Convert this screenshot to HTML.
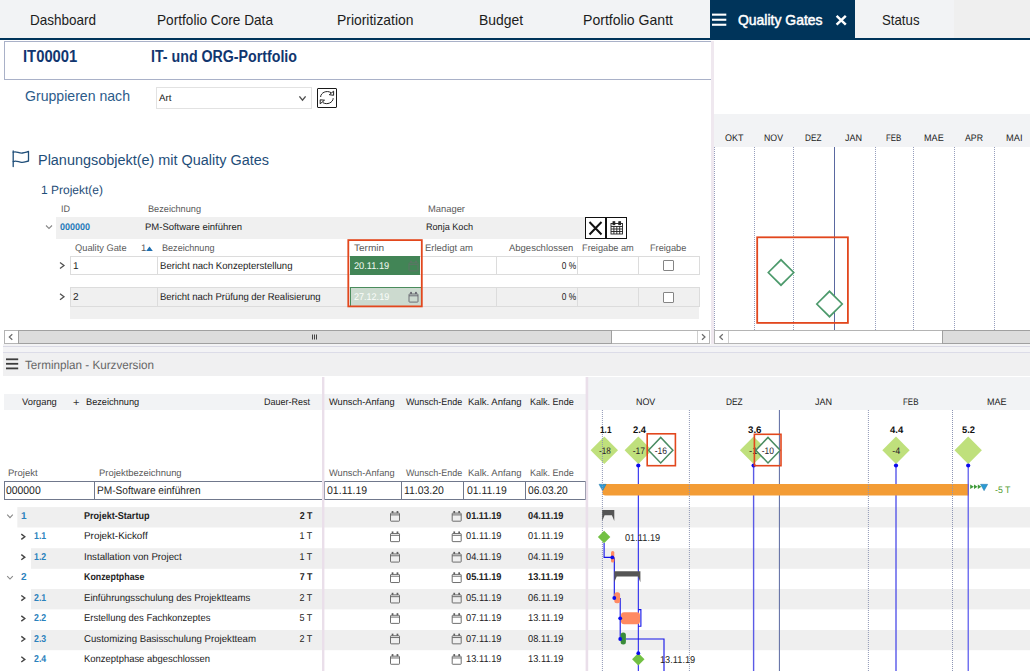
<!DOCTYPE html>
<html><head><meta charset="utf-8"><title>Quality Gates</title>
<style>
html,body{margin:0;padding:0;background:#fff;}
body{width:1030px;height:671px;position:relative;overflow:hidden;font-family:"Liberation Sans",sans-serif;}
.a{position:absolute;box-sizing:border-box;}
.t{position:absolute;white-space:pre;line-height:1;transform-origin:0 0;font-family:"Liberation Sans",sans-serif;}
svg{position:absolute;left:0;top:0;overflow:visible;}
</style></head><body>
<div class="a" style="left:0px;top:0px;width:1030px;height:38px;background:#f2f3f5;"></div>
<div class="a" style="left:954px;top:0px;width:76px;height:38px;background:#efefef;"></div>
<div class="a" style="left:0px;top:38px;width:1030px;height:2px;background:#00345a;"></div>
<div class="a" style="left:710px;top:0px;width:145px;height:40px;background:#00345a;"></div>
<span class="t" style="left:29.50px;top:12.73px;font-size:14.5px;color:#1c1c1c;transform:scaleX(0.9304);">Dashboard</span>
<span class="t" style="left:156.50px;top:12.73px;font-size:14.5px;color:#1c1c1c;transform:scaleX(0.9407);">Portfolio Core Data</span>
<span class="t" style="left:337.00px;top:12.73px;font-size:14.5px;color:#1c1c1c;transform:scaleX(0.9589);">Prioritization</span>
<span class="t" style="left:479.00px;top:12.73px;font-size:14.5px;color:#1c1c1c;transform:scaleX(0.9572);">Budget</span>
<span class="t" style="left:583.00px;top:12.73px;font-size:14.5px;color:#1c1c1c;transform:scaleX(0.9710);">Portfolio Gantt</span>
<span class="t" style="left:737.50px;top:12.73px;font-size:14.5px;color:#fff;transform:scaleX(0.9619);-webkit-text-stroke:0.5px #fff;">Quality Gates</span>
<span class="t" style="left:882.40px;top:12.73px;font-size:14.5px;color:#1c1c1c;transform:scaleX(0.9122);">Status</span>
<svg width="1030" height="671" viewBox="0 0 1030 671"><rect x="712" y="13.6" width="14.3" height="2.1" fill="#fff"/><rect x="712" y="18.7" width="14.3" height="2.1" fill="#fff"/><rect x="712" y="23.7" width="14.3" height="2.1" fill="#fff"/><path d="M836.6 15.9 L845.8 24.6 M845.8 15.9 L836.6 24.6" stroke="#fff" stroke-width="2.5" fill="none"/></svg>
<div class="a" style="left:4px;top:41px;width:708px;height:39px;background:#fff;border:1px solid #a9b1c8;"></div>
<span class="t" style="left:22.70px;top:49.26px;font-size:16px;color:#11366f;font-weight:700;transform:scaleX(0.9247);">IT00001</span>
<span class="t" style="left:151.00px;top:49.26px;font-size:16px;color:#11366f;font-weight:700;transform:scaleX(0.8880);">IT- und ORG-Portfolio</span>
<div class="a" style="left:711px;top:41px;width:3px;height:303px;background:#efe8ef;"></div>
<span class="t" style="left:25.00px;top:88.93px;font-size:14.5px;color:#2c5b8a;transform:scaleX(0.9721);">Gruppieren nach</span>
<div class="a" style="left:156px;top:87px;width:156px;height:22px;background:#fff;border:1px solid #e2e2e2;"></div>
<span class="t" style="left:159.00px;top:93.16px;font-size:9.5px;color:#222;transform:scaleX(1.0296) rotate(0.03deg);">Art</span>
<div class="a" style="left:316.5px;top:88px;width:20.5px;height:20px;background:#fff;border:1px solid #1a1a1a;border-radius:1px;"></div>
<svg width="1030" height="671" viewBox="0 0 1030 671"><path d="M299.4 96.4 L302.5 100.2 L305.6 96.4" stroke="#505050" stroke-width="1.4" fill="none"/><g stroke="#222" stroke-width="1" fill="none" stroke-linejoin="round"><path d="M320.6 97 C320.8 92.6 326.5 90 331 92.6"/><path d="M333.2 98.2 C333 102.6 327.3 105.2 322.8 102.6"/><path d="M329.3 94.7 L333.6 91.2 L333.6 95.3 Z"/><path d="M324.5 100.2 L320.2 99.8 L320.2 103.8 Z"/></g><g stroke="#1f4e79" stroke-width="1.3" fill="none" stroke-linecap="round" stroke-linejoin="round"><path d="M13.2 151 L13.2 166.5"/><path d="M13.2 152.3 C16 150.8 19 153.6 22.5 153 C25 152.6 27 151.8 28.5 151.5 L28.5 161 C26 161.5 24 162.6 21.5 162.3 C18.5 162 16 160.3 13.2 161.6"/></g></svg>
<span class="t" style="left:38.00px;top:152.48px;font-size:15.5px;color:#1f4e79;transform:scaleX(0.9310);">Planungsobjekt(e) mit Quality Gates</span>
<span class="t" style="left:41.00px;top:183.84px;font-size:12px;color:#1f4e79;transform:scaleX(0.9995) rotate(0.03deg);">1 Projekt(e)</span>
<span class="t" style="left:61.00px;top:203.96px;font-size:9.5px;color:#5a5a5a;transform:scaleX(0.9474) rotate(0.03deg);">ID</span>
<span class="t" style="left:147.70px;top:203.96px;font-size:9.5px;color:#5a5a5a;transform:scaleX(0.9647) rotate(0.03deg);">Bezeichnung</span>
<span class="t" style="left:428.20px;top:203.96px;font-size:9.5px;color:#5a5a5a;transform:scaleX(0.9867) rotate(0.03deg);">Manager</span>
<div class="a" style="left:56px;top:217px;width:530px;height:22px;background:#f0f0f0;"></div>
<svg width="1030" height="671" viewBox="0 0 1030 671"><path d="M46 225.5 L49 228.5 L52 225.5" stroke="#888" stroke-width="1.1" fill="none"/></svg>
<span class="t" style="left:59.60px;top:222.36px;font-size:9.5px;color:#1f7ab8;font-weight:700;transform:scaleX(0.9463) rotate(0.03deg);">000000</span>
<span class="t" style="left:145.20px;top:222.36px;font-size:9.5px;color:#222;transform:scaleX(0.9982) rotate(0.03deg);">PM-Software einführen</span>
<span class="t" style="left:425.80px;top:222.36px;font-size:9.5px;color:#222;transform:scaleX(0.9567) rotate(0.03deg);">Ronja Koch</span>
<div class="a" style="left:585px;top:217px;width:21px;height:22px;background:#fff;border:1px solid #111;"></div>
<div class="a" style="left:606px;top:217px;width:21px;height:22px;background:#fff;border:1px solid #111;"></div>
<svg width="1030" height="671" viewBox="0 0 1030 671"><path d="M589.5 222 L601.5 234.5 M601.5 222 L589.5 234.5" stroke="#111" stroke-width="2" fill="none"/><g stroke="#222" stroke-width="0.9" fill="none"><rect x="611" y="223.5" width="11.5" height="10.5"/><path d="M611 226.5 H622.5 M611 229 H622.5 M611 231.5 H622.5 M613.9 226.5 V234 M616.8 226.5 V234 M619.7 226.5 V234"/><rect x="613" y="221.7" width="1.8" height="3" fill="#222"/><rect x="618.8" y="221.7" width="1.8" height="3" fill="#222"/></g></svg>
<span class="t" style="left:74.70px;top:242.66px;font-size:9.5px;color:#5a5a5a;transform:scaleX(0.9770) rotate(0.03deg);">Quality Gate</span>
<span class="t" style="left:140.60px;top:242.66px;font-size:9.5px;color:#5a5a5a;transform:scaleX(1.0000) rotate(0.03deg);">1</span>
<svg width="1030" height="671" viewBox="0 0 1030 671"><path d="M146.2 251 L149.5 246.5 L152.8 251 Z" fill="#1f6fb0"/></svg>
<span class="t" style="left:161.60px;top:242.66px;font-size:9.5px;color:#5a5a5a;transform:scaleX(0.9556) rotate(0.03deg);">Bezeichnung</span>
<span class="t" style="left:354.40px;top:242.66px;font-size:9.5px;color:#5a5a5a;transform:scaleX(1.0591) rotate(0.03deg);">Termin</span>
<span class="t" style="left:424.50px;top:242.66px;font-size:9.5px;color:#5a5a5a;transform:scaleX(0.9987) rotate(0.03deg);">Erledigt am</span>
<span class="t" style="left:508.70px;top:242.66px;font-size:9.5px;color:#5a5a5a;transform:scaleX(0.9979) rotate(0.03deg);">Abgeschlossen</span>
<span class="t" style="left:582.00px;top:242.66px;font-size:9.5px;color:#5a5a5a;transform:scaleX(0.9711) rotate(0.03deg);">Freigabe am</span>
<span class="t" style="left:650.00px;top:242.66px;font-size:9.5px;color:#5a5a5a;transform:scaleX(0.9680) rotate(0.03deg);">Freigabe</span>
<div class="a" style="left:70px;top:256px;width:630px;height:19px;background:#fff;border:1px solid #dcdcdc;"></div>
<div class="a" style="left:157px;top:256px;width:1px;height:19px;background:#dcdcdc;"></div>
<div class="a" style="left:496px;top:256px;width:1px;height:19px;background:#dcdcdc;"></div>
<div class="a" style="left:577px;top:256px;width:1px;height:19px;background:#dcdcdc;"></div>
<div class="a" style="left:638px;top:256px;width:1px;height:19px;background:#dcdcdc;"></div>
<div class="a" style="left:70px;top:287px;width:630px;height:20px;background:#f0f0f0;border:1px solid #dcdcdc;"></div>
<div class="a" style="left:157px;top:287px;width:1px;height:20px;background:#dcdcdc;"></div>
<div class="a" style="left:496px;top:287px;width:1px;height:20px;background:#dcdcdc;"></div>
<div class="a" style="left:577px;top:287px;width:1px;height:20px;background:#dcdcdc;"></div>
<div class="a" style="left:638px;top:287px;width:1px;height:20px;background:#dcdcdc;"></div>
<div class="a" style="left:70px;top:307px;width:629px;height:11.5px;background:#f0f0f0;"></div>
<svg width="1030" height="671" viewBox="0 0 1030 671"><path d="M60 262.5 L64 265.5 L60 268.5" stroke="#505050" stroke-width="1.25" fill="none"/><path d="M60 293.7 L64 296.7 L60 299.7" stroke="#505050" stroke-width="1.25" fill="none"/></svg>
<span class="t" style="left:73.20px;top:260.74px;font-size:10px;color:#222;transform:scaleX(1.0000) rotate(0.03deg);">1</span>
<span class="t" style="left:73.20px;top:291.74px;font-size:10px;color:#222;transform:scaleX(1.0000) rotate(0.03deg);">2</span>
<span class="t" style="left:159.50px;top:260.74px;font-size:10px;color:#222;transform:scaleX(0.9572) rotate(0.03deg);">Bericht nach Konzepterstellung</span>
<span class="t" style="left:159.50px;top:291.74px;font-size:10px;color:#222;transform:scaleX(0.9498) rotate(0.03deg);">Bericht nach Prüfung der Realisierung</span>
<span class="t" style="left:558.77px;top:260.74px;font-size:10px;color:#222;transform:scaleX(0.8355) rotate(0.03deg);transform-origin:100% 0;">0 %</span>
<span class="t" style="left:558.77px;top:291.74px;font-size:10px;color:#222;transform:scaleX(0.8355) rotate(0.03deg);transform-origin:100% 0;">0 %</span>
<div class="a" style="left:350px;top:256px;width:70px;height:19px;background:#428556;"></div>
<div class="a" style="left:350px;top:287px;width:71px;height:19.5px;background:#ccdacf;border:1px solid #4a8c5c;border-right:none;border-bottom:none;"></div>
<span class="t" style="left:353.60px;top:260.60px;font-size:9.8px;color:#f4fbf4;transform:scaleX(0.9406) rotate(0.03deg);">20.11.19</span>
<span class="t" style="left:353.60px;top:291.60px;font-size:9.8px;color:#fafdfa;transform:scaleX(0.9229) rotate(0.03deg);">27.12.19</span>
<svg width="1030" height="671" viewBox="0 0 1030 671"><g stroke="#5c7565" stroke-width="1.0" fill="none"><rect x="409.0" y="262.8" width="9" height="8.1" rx="0.6"/><path d="M409.0 264.6 H418.0" /><rect x="410.2" y="260.7" width="1.7" height="2.1" fill="#5c7565" stroke="none"/><rect x="415.1" y="260.7" width="1.7" height="2.1" fill="#5c7565" stroke="none"/></g><g stroke="#62626c" stroke-width="0.9" fill="#ccdacf"><rect x="409.0" y="294.0" width="9" height="8.1" rx="0.6"/><path d="M409.0 295.8 H418.0" /><rect x="410.2" y="291.9" width="1.7" height="2.1" fill="#62626c" stroke="none"/><rect x="415.1" y="291.9" width="1.7" height="2.1" fill="#62626c" stroke="none"/></g></svg>
<div class="a" style="left:662.5px;top:260px;width:11.5px;height:11px;background:#fff;border:1px solid #858585;border-radius:1px;"></div>
<div class="a" style="left:662.5px;top:291.5px;width:11.5px;height:11px;background:#fff;border:1px solid #858585;border-radius:1px;"></div>
<svg width="1030" height="671" viewBox="0 0 1030 671"><rect x="348.29999999999995" y="240.1" width="73.50000000000001" height="66.30000000000003" fill="none" stroke="#e2471d" stroke-width="1.8"/></svg>
<div class="a" style="left:714px;top:114px;width:316px;height:33px;background:#f2f3f5;"></div>
<span class="t" style="left:724.50px;top:132.96px;font-size:9.5px;color:#1c1c1c;transform:scaleX(0.9472) rotate(0.03deg);">OKT</span>
<span class="t" style="left:763.50px;top:132.96px;font-size:9.5px;color:#1c1c1c;transform:scaleX(0.9226) rotate(0.03deg);">NOV</span>
<span class="t" style="left:805.40px;top:132.96px;font-size:9.5px;color:#1c1c1c;transform:scaleX(0.8632) rotate(0.03deg);">DEZ</span>
<span class="t" style="left:845.30px;top:132.96px;font-size:9.5px;color:#1c1c1c;transform:scaleX(0.9525) rotate(0.03deg);">JAN</span>
<span class="t" style="left:886.20px;top:132.96px;font-size:9.5px;color:#1c1c1c;transform:scaleX(0.8331) rotate(0.03deg);">FEB</span>
<span class="t" style="left:923.50px;top:132.96px;font-size:9.5px;color:#1c1c1c;transform:scaleX(0.9566) rotate(0.03deg);">MAE</span>
<span class="t" style="left:965.00px;top:132.96px;font-size:9.5px;color:#1c1c1c;transform:scaleX(0.9209) rotate(0.03deg);">APR</span>
<span class="t" style="left:1006.00px;top:132.96px;font-size:9.5px;color:#1c1c1c;transform:scaleX(0.9769) rotate(0.03deg);">MAI</span>
<svg width="1030" height="671" viewBox="0 0 1030 671"><path d="M714.5 147 V330" stroke="#969ebc" stroke-width="1" stroke-dasharray="1 1"/><path d="M754.5 147 V330" stroke="#969ebc" stroke-width="1" stroke-dasharray="1 1"/><path d="M793.5 147 V330" stroke="#969ebc" stroke-width="1" stroke-dasharray="1 1"/><path d="M875.5 147 V330" stroke="#969ebc" stroke-width="1" stroke-dasharray="1 1"/><path d="M913.5 147 V330" stroke="#969ebc" stroke-width="1" stroke-dasharray="1 1"/><path d="M954.5 147 V330" stroke="#969ebc" stroke-width="1" stroke-dasharray="1 1"/><path d="M994.5 147 V330" stroke="#969ebc" stroke-width="1" stroke-dasharray="1 1"/><path d="M834.5 147 V330" stroke="#5a68a0" stroke-width="1"/><polygon points="768.3,272.5 781,259.8 793.7,272.5 781,285.2" fill="#fff" stroke="#4d9a6c" stroke-width="1.7"/><polygon points="816.8,304 829.5,291.3 842.2,304 829.5,316.7" fill="#fff" stroke="#4d9a6c" stroke-width="1.7"/><rect x="757.1999999999999" y="237.3" width="90.7" height="85.60000000000001" fill="none" stroke="#e2471d" stroke-width="1.8"/></svg>
<div class="a" style="left:4px;top:330px;width:706px;height:14px;background:#fff;border:1px solid #b4b4b4;"></div>
<div class="a" style="left:18px;top:330px;width:594px;height:14px;background:#dcdcdc;border:1px solid #a0a0a0;"></div>
<div class="a" style="left:697px;top:331px;width:1px;height:12px;background:#cfcfcf;"></div>
<div class="a" style="left:714px;top:330px;width:316px;height:14px;background:#fff;border:1px solid #b4b4b4;"></div>
<div class="a" style="left:728px;top:331px;width:1px;height:12px;background:#cfcfcf;"></div>
<div class="a" style="left:942px;top:330px;width:90px;height:14px;background:#dcdcdc;border:1px solid #a0a0a0;"></div>
<svg width="1030" height="671" viewBox="0 0 1030 671"><path d="M12.3 334.2 L9.3 337 L12.3 339.8" stroke="#6a6a6a" stroke-width="1.2" fill="none"/><path d="M702 334.2 L705 337 L702 339.8" stroke="#6a6a6a" stroke-width="1.2" fill="none"/><path d="M722.8 334.2 L719.8 337 L722.8 339.8" stroke="#6a6a6a" stroke-width="1.2" fill="none"/><path d="M312.5 334.5 V339.5" stroke="#444" stroke-width="1"/><path d="M314.5 334.5 V339.5" stroke="#444" stroke-width="1"/><path d="M316.5 334.5 V339.5" stroke="#444" stroke-width="1"/></svg>
<div class="a" style="left:3px;top:344px;width:1027px;height:9px;background:#f3f3f5;"></div>
<div class="a" style="left:3px;top:346px;width:1027px;height:1px;background:#d9d9e4;"></div>
<div class="a" style="left:3px;top:352px;width:1027px;height:1px;background:#dcdce8;"></div>
<div class="a" style="left:3px;top:353px;width:1027px;height:23px;background:#f0f0f1;"></div>
<svg width="1030" height="671" viewBox="0 0 1030 671"><rect x="6" y="358.40000000000003" width="12.2" height="1.8" fill="#3c3c3c"/><rect x="6" y="362.90000000000003" width="12.2" height="1.8" fill="#3c3c3c"/><rect x="6" y="367.5" width="12.2" height="1.8" fill="#3c3c3c"/></svg>
<span class="t" style="left:24.60px;top:359.24px;font-size:12px;color:#666;transform:scaleX(0.9720) rotate(0.03deg);">Terminplan - Kurzversion</span>
<div class="a" style="left:4px;top:394px;width:582px;height:16px;background:#f2f3f5;"></div>
<div class="a" style="left:586px;top:377px;width:444px;height:33px;background:#f2f3f5;"></div>
<span class="t" style="left:21.50px;top:396.86px;font-size:9.5px;color:#222;transform:scaleX(0.9829) rotate(0.03deg);">Vorgang</span>
<span class="t" style="left:73.00px;top:396.79px;font-size:11px;color:#333;transform:scaleX(1.0000) rotate(0.03deg);">+</span>
<span class="t" style="left:86.40px;top:396.86px;font-size:9.5px;color:#222;transform:scaleX(0.9684) rotate(0.03deg);">Bezeichnung</span>
<span class="t" style="left:264.30px;top:396.86px;font-size:9.5px;color:#222;transform:scaleX(0.9469) rotate(0.03deg);">Dauer-Rest</span>
<span class="t" style="left:328.70px;top:396.86px;font-size:9.5px;color:#222;transform:scaleX(0.9730) rotate(0.03deg);">Wunsch-Anfang</span>
<span class="t" style="left:406.20px;top:396.86px;font-size:9.5px;color:#222;transform:scaleX(0.9462) rotate(0.03deg);">Wunsch-Ende</span>
<span class="t" style="left:468.30px;top:396.86px;font-size:9.5px;color:#222;transform:scaleX(1.0026) rotate(0.03deg);">Kalk. Anfang</span>
<span class="t" style="left:530.00px;top:396.86px;font-size:9.5px;color:#222;transform:scaleX(0.9510) rotate(0.03deg);">Kalk. Ende</span>
<span class="t" style="left:8.40px;top:467.96px;font-size:9.5px;color:#5a5a5a;transform:scaleX(1.0007) rotate(0.03deg);">Projekt</span>
<span class="t" style="left:98.60px;top:467.96px;font-size:9.5px;color:#5a5a5a;transform:scaleX(0.9898) rotate(0.03deg);">Projektbezeichnung</span>
<span class="t" style="left:328.70px;top:467.96px;font-size:9.5px;color:#5a5a5a;transform:scaleX(0.9730) rotate(0.03deg);">Wunsch-Anfang</span>
<span class="t" style="left:406.20px;top:467.96px;font-size:9.5px;color:#5a5a5a;transform:scaleX(0.9462) rotate(0.03deg);">Wunsch-Ende</span>
<span class="t" style="left:468.30px;top:467.96px;font-size:9.5px;color:#5a5a5a;transform:scaleX(1.0026) rotate(0.03deg);">Kalk. Anfang</span>
<span class="t" style="left:530.00px;top:467.96px;font-size:9.5px;color:#5a5a5a;transform:scaleX(0.9510) rotate(0.03deg);">Kalk. Ende</span>
<svg width="1030" height="671" viewBox="0 0 1030 671"><rect x="17.3" y="507.1" width="1012.7" height="20.40" fill="#efefef"/><rect x="31" y="548.2" width="999" height="20.60" fill="#efefef"/><rect x="31" y="589" width="999" height="20.40" fill="#efefef"/><rect x="31" y="630" width="999" height="20.20" fill="#efefef"/></svg>
<div class="a" style="left:4px;top:481px;width:319px;height:19px;background:#fff;border:1px solid #70788c;"></div>
<div class="a" style="left:94px;top:481px;width:1px;height:19px;background:#70788c;"></div>
<div class="a" style="left:324px;top:481px;width:262px;height:19px;background:#fff;border:1px solid #70788c;"></div>
<div class="a" style="left:401px;top:481px;width:1px;height:19px;background:#70788c;"></div>
<div class="a" style="left:463px;top:481px;width:1px;height:19px;background:#70788c;"></div>
<div class="a" style="left:525px;top:481px;width:1px;height:19px;background:#70788c;"></div>
<span class="t" style="left:6.30px;top:485.09px;font-size:11px;color:#222;transform:scaleX(0.9450) rotate(0.03deg);">000000</span>
<span class="t" style="left:96.60px;top:485.09px;font-size:11px;color:#222;transform:scaleX(0.9209) rotate(0.03deg);">PM-Software einführen</span>
<span class="t" style="left:327.00px;top:485.09px;font-size:11px;color:#222;transform:scaleX(0.9568) rotate(0.03deg);">01.11.19</span>
<span class="t" style="left:404.40px;top:485.09px;font-size:11px;color:#222;transform:scaleX(0.9473) rotate(0.03deg);">11.03.20</span>
<span class="t" style="left:466.50px;top:485.09px;font-size:11px;color:#222;transform:scaleX(0.9473) rotate(0.03deg);">01.11.19</span>
<span class="t" style="left:528.40px;top:485.09px;font-size:11px;color:#222;transform:scaleX(0.9293) rotate(0.03deg);">06.03.20</span>
<svg width="1030" height="671" viewBox="0 0 1030 671"><rect x="322" y="377" width="2.4" height="294" fill="#eadfea"/><rect x="585.6" y="377" width="2.6" height="294" fill="#eadfea"/><path d="M7.2 514.70 L10 517.70 L12.8 514.70" stroke="#888" stroke-width="1.1" fill="none"/><g stroke="#606060" stroke-width="0.9" fill="none"><rect x="390.5" y="513.1" width="9" height="8.1" rx="0.6"/><path d="M390.5 514.9 H399.5" /><rect x="391.7" y="511.0" width="1.7" height="2.1" fill="#606060" stroke="none"/><rect x="396.6" y="511.0" width="1.7" height="2.1" fill="#606060" stroke="none"/></g><g stroke="#606060" stroke-width="0.9" fill="none"><rect x="452.2" y="513.1" width="9" height="8.1" rx="0.6"/><path d="M452.2 514.9 H461.2" /><rect x="453.4" y="511.0" width="1.7" height="2.1" fill="#606060" stroke="none"/><rect x="458.3" y="511.0" width="1.7" height="2.1" fill="#606060" stroke="none"/></g><path d="M21.3 534.14 L24.8 536.74 L21.3 539.34" stroke="#444" stroke-width="1.4" fill="none"/><g stroke="#606060" stroke-width="0.9" fill="none"><rect x="390.5" y="533.54" width="9" height="8.1" rx="0.6"/><path d="M390.5 535.3399999999999 H399.5" /><rect x="391.7" y="531.4399999999999" width="1.7" height="2.1" fill="#606060" stroke="none"/><rect x="396.6" y="531.4399999999999" width="1.7" height="2.1" fill="#606060" stroke="none"/></g><g stroke="#606060" stroke-width="0.9" fill="none"><rect x="452.2" y="533.54" width="9" height="8.1" rx="0.6"/><path d="M452.2 535.3399999999999 H461.2" /><rect x="453.4" y="531.4399999999999" width="1.7" height="2.1" fill="#606060" stroke="none"/><rect x="458.3" y="531.4399999999999" width="1.7" height="2.1" fill="#606060" stroke="none"/></g><path d="M21.3 554.58 L24.8 557.18 L21.3 559.78" stroke="#444" stroke-width="1.4" fill="none"/><g stroke="#606060" stroke-width="0.9" fill="none"><rect x="390.5" y="553.98" width="9" height="8.1" rx="0.6"/><path d="M390.5 555.78 H399.5" /><rect x="391.7" y="551.88" width="1.7" height="2.1" fill="#606060" stroke="none"/><rect x="396.6" y="551.88" width="1.7" height="2.1" fill="#606060" stroke="none"/></g><g stroke="#606060" stroke-width="0.9" fill="none"><rect x="452.2" y="553.98" width="9" height="8.1" rx="0.6"/><path d="M452.2 555.78 H461.2" /><rect x="453.4" y="551.88" width="1.7" height="2.1" fill="#606060" stroke="none"/><rect x="458.3" y="551.88" width="1.7" height="2.1" fill="#606060" stroke="none"/></g><path d="M7.2 576.02 L10 579.02 L12.8 576.02" stroke="#888" stroke-width="1.1" fill="none"/><g stroke="#606060" stroke-width="0.9" fill="none"><rect x="390.5" y="574.42" width="9" height="8.1" rx="0.6"/><path d="M390.5 576.2199999999999 H399.5" /><rect x="391.7" y="572.3199999999999" width="1.7" height="2.1" fill="#606060" stroke="none"/><rect x="396.6" y="572.3199999999999" width="1.7" height="2.1" fill="#606060" stroke="none"/></g><g stroke="#606060" stroke-width="0.9" fill="none"><rect x="452.2" y="574.42" width="9" height="8.1" rx="0.6"/><path d="M452.2 576.2199999999999 H461.2" /><rect x="453.4" y="572.3199999999999" width="1.7" height="2.1" fill="#606060" stroke="none"/><rect x="458.3" y="572.3199999999999" width="1.7" height="2.1" fill="#606060" stroke="none"/></g><path d="M21.3 595.46 L24.8 598.06 L21.3 600.66" stroke="#444" stroke-width="1.4" fill="none"/><g stroke="#606060" stroke-width="0.9" fill="none"><rect x="390.5" y="594.86" width="9" height="8.1" rx="0.6"/><path d="M390.5 596.66 H399.5" /><rect x="391.7" y="592.76" width="1.7" height="2.1" fill="#606060" stroke="none"/><rect x="396.6" y="592.76" width="1.7" height="2.1" fill="#606060" stroke="none"/></g><g stroke="#606060" stroke-width="0.9" fill="none"><rect x="452.2" y="594.86" width="9" height="8.1" rx="0.6"/><path d="M452.2 596.66 H461.2" /><rect x="453.4" y="592.76" width="1.7" height="2.1" fill="#606060" stroke="none"/><rect x="458.3" y="592.76" width="1.7" height="2.1" fill="#606060" stroke="none"/></g><path d="M21.3 615.90 L24.8 618.50 L21.3 621.10" stroke="#444" stroke-width="1.4" fill="none"/><g stroke="#606060" stroke-width="0.9" fill="none"><rect x="390.5" y="615.3" width="9" height="8.1" rx="0.6"/><path d="M390.5 617.0999999999999 H399.5" /><rect x="391.7" y="613.1999999999999" width="1.7" height="2.1" fill="#606060" stroke="none"/><rect x="396.6" y="613.1999999999999" width="1.7" height="2.1" fill="#606060" stroke="none"/></g><g stroke="#606060" stroke-width="0.9" fill="none"><rect x="452.2" y="615.3" width="9" height="8.1" rx="0.6"/><path d="M452.2 617.0999999999999 H461.2" /><rect x="453.4" y="613.1999999999999" width="1.7" height="2.1" fill="#606060" stroke="none"/><rect x="458.3" y="613.1999999999999" width="1.7" height="2.1" fill="#606060" stroke="none"/></g><path d="M21.3 636.34 L24.8 638.94 L21.3 641.54" stroke="#444" stroke-width="1.4" fill="none"/><g stroke="#606060" stroke-width="0.9" fill="none"><rect x="390.5" y="635.74" width="9" height="8.1" rx="0.6"/><path d="M390.5 637.54 H399.5" /><rect x="391.7" y="633.64" width="1.7" height="2.1" fill="#606060" stroke="none"/><rect x="396.6" y="633.64" width="1.7" height="2.1" fill="#606060" stroke="none"/></g><g stroke="#606060" stroke-width="0.9" fill="none"><rect x="452.2" y="635.74" width="9" height="8.1" rx="0.6"/><path d="M452.2 637.54 H461.2" /><rect x="453.4" y="633.64" width="1.7" height="2.1" fill="#606060" stroke="none"/><rect x="458.3" y="633.64" width="1.7" height="2.1" fill="#606060" stroke="none"/></g><path d="M21.3 656.78 L24.8 659.38 L21.3 661.98" stroke="#444" stroke-width="1.4" fill="none"/><g stroke="#606060" stroke-width="0.9" fill="none"><rect x="390.5" y="656.18" width="9" height="8.1" rx="0.6"/><path d="M390.5 657.9799999999999 H399.5" /><rect x="391.7" y="654.0799999999999" width="1.7" height="2.1" fill="#606060" stroke="none"/><rect x="396.6" y="654.0799999999999" width="1.7" height="2.1" fill="#606060" stroke="none"/></g><g stroke="#606060" stroke-width="0.9" fill="none"><rect x="452.2" y="656.18" width="9" height="8.1" rx="0.6"/><path d="M452.2 657.9799999999999 H461.2" /><rect x="453.4" y="654.0799999999999" width="1.7" height="2.1" fill="#606060" stroke="none"/><rect x="458.3" y="654.0799999999999" width="1.7" height="2.1" fill="#606060" stroke="none"/></g></svg>
<span class="t" style="left:21.00px;top:511.04px;font-size:10px;color:#2b82bd;font-weight:700;transform:scaleX(1.0000) rotate(0.03deg);">1</span>
<span class="t" style="left:83.60px;top:511.04px;font-size:10px;color:#222;font-weight:700;transform:scaleX(0.9068) rotate(0.03deg);">Projekt-Startup</span>
<span class="t" style="left:297.85px;top:511.04px;font-size:10px;color:#222;font-weight:700;transform:scaleX(0.8856) rotate(0.03deg);transform-origin:100% 0;">2 T</span>
<span class="t" style="left:465.50px;top:511.04px;font-size:10px;color:#222;font-weight:700;transform:scaleX(0.9251) rotate(0.03deg);">01.11.19</span>
<span class="t" style="left:527.60px;top:511.04px;font-size:10px;color:#222;font-weight:700;transform:scaleX(0.9251) rotate(0.03deg);">04.11.19</span>
<span class="t" style="left:33.70px;top:531.48px;font-size:10px;color:#2b82bd;font-weight:700;transform:scaleX(0.8773) rotate(0.03deg);">1.1</span>
<span class="t" style="left:83.60px;top:531.48px;font-size:10px;color:#222;transform:scaleX(0.9907) rotate(0.03deg);">Projekt-Kickoff</span>
<span class="t" style="left:298.02px;top:531.48px;font-size:10px;color:#222;transform:scaleX(0.8963) rotate(0.03deg);transform-origin:100% 0;">1 T</span>
<span class="t" style="left:465.50px;top:531.48px;font-size:10px;color:#222;transform:scaleX(0.9296) rotate(0.03deg);">01.11.19</span>
<span class="t" style="left:527.60px;top:531.48px;font-size:10px;color:#222;transform:scaleX(0.9296) rotate(0.03deg);">01.11.19</span>
<span class="t" style="left:33.70px;top:551.91px;font-size:10px;color:#2b82bd;font-weight:700;transform:scaleX(0.8773) rotate(0.03deg);">1.2</span>
<span class="t" style="left:83.60px;top:551.91px;font-size:10px;color:#222;transform:scaleX(0.9699) rotate(0.03deg);">Installation von Project</span>
<span class="t" style="left:298.02px;top:551.91px;font-size:10px;color:#222;transform:scaleX(0.8963) rotate(0.03deg);transform-origin:100% 0;">1 T</span>
<span class="t" style="left:465.50px;top:551.91px;font-size:10px;color:#222;transform:scaleX(0.9296) rotate(0.03deg);">04.11.19</span>
<span class="t" style="left:527.60px;top:551.91px;font-size:10px;color:#222;transform:scaleX(0.9296) rotate(0.03deg);">04.11.19</span>
<span class="t" style="left:21.00px;top:572.36px;font-size:10px;color:#2b82bd;font-weight:700;transform:scaleX(1.0000) rotate(0.03deg);">2</span>
<span class="t" style="left:83.60px;top:572.36px;font-size:10px;color:#222;font-weight:700;transform:scaleX(0.8838) rotate(0.03deg);">Konzeptphase</span>
<span class="t" style="left:297.85px;top:572.36px;font-size:10px;color:#222;font-weight:700;transform:scaleX(0.8856) rotate(0.03deg);transform-origin:100% 0;">7 T</span>
<span class="t" style="left:465.50px;top:572.36px;font-size:10px;color:#222;font-weight:700;transform:scaleX(0.9251) rotate(0.03deg);">05.11.19</span>
<span class="t" style="left:527.60px;top:572.36px;font-size:10px;color:#222;font-weight:700;transform:scaleX(0.9251) rotate(0.03deg);">13.11.19</span>
<span class="t" style="left:33.70px;top:592.79px;font-size:10px;color:#2b82bd;font-weight:700;transform:scaleX(0.8773) rotate(0.03deg);">2.1</span>
<span class="t" style="left:83.60px;top:592.79px;font-size:10px;color:#222;transform:scaleX(0.9583) rotate(0.03deg);">Einführungsschulung des Projektteams</span>
<span class="t" style="left:298.02px;top:592.79px;font-size:10px;color:#222;transform:scaleX(0.8963) rotate(0.03deg);transform-origin:100% 0;">2 T</span>
<span class="t" style="left:465.50px;top:592.79px;font-size:10px;color:#222;transform:scaleX(0.9296) rotate(0.03deg);">05.11.19</span>
<span class="t" style="left:527.60px;top:592.79px;font-size:10px;color:#222;transform:scaleX(0.9296) rotate(0.03deg);">06.11.19</span>
<span class="t" style="left:33.70px;top:613.24px;font-size:10px;color:#2b82bd;font-weight:700;transform:scaleX(0.8773) rotate(0.03deg);">2.2</span>
<span class="t" style="left:83.60px;top:613.24px;font-size:10px;color:#222;transform:scaleX(0.9435) rotate(0.03deg);">Erstellung des Fachkonzeptes</span>
<span class="t" style="left:298.02px;top:613.24px;font-size:10px;color:#222;transform:scaleX(0.8963) rotate(0.03deg);transform-origin:100% 0;">5 T</span>
<span class="t" style="left:465.50px;top:613.24px;font-size:10px;color:#222;transform:scaleX(0.9296) rotate(0.03deg);">07.11.19</span>
<span class="t" style="left:527.60px;top:613.24px;font-size:10px;color:#222;transform:scaleX(0.9296) rotate(0.03deg);">13.11.19</span>
<span class="t" style="left:33.70px;top:633.67px;font-size:10px;color:#2b82bd;font-weight:700;transform:scaleX(0.8773) rotate(0.03deg);">2.3</span>
<span class="t" style="left:83.60px;top:633.67px;font-size:10px;color:#222;transform:scaleX(0.9640) rotate(0.03deg);">Customizing Basisschulung Projektteam</span>
<span class="t" style="left:298.02px;top:633.67px;font-size:10px;color:#222;transform:scaleX(0.8963) rotate(0.03deg);transform-origin:100% 0;">2 T</span>
<span class="t" style="left:465.50px;top:633.67px;font-size:10px;color:#222;transform:scaleX(0.9296) rotate(0.03deg);">07.11.19</span>
<span class="t" style="left:527.60px;top:633.67px;font-size:10px;color:#222;transform:scaleX(0.9296) rotate(0.03deg);">08.11.19</span>
<span class="t" style="left:33.70px;top:654.12px;font-size:10px;color:#2b82bd;font-weight:700;transform:scaleX(0.8773) rotate(0.03deg);">2.4</span>
<span class="t" style="left:83.60px;top:654.12px;font-size:10px;color:#222;transform:scaleX(0.9443) rotate(0.03deg);">Konzeptphase abgeschlossen</span>
<span class="t" style="left:465.50px;top:654.12px;font-size:10px;color:#222;transform:scaleX(0.9296) rotate(0.03deg);">13.11.19</span>
<span class="t" style="left:527.60px;top:654.12px;font-size:10px;color:#222;transform:scaleX(0.9296) rotate(0.03deg);">13.11.19</span>
<span class="t" style="left:635.60px;top:396.86px;font-size:9.5px;color:#1c1c1c;transform:scaleX(0.9372) rotate(0.03deg);">NOV</span>
<span class="t" style="left:725.50px;top:396.86px;font-size:9.5px;color:#1c1c1c;transform:scaleX(0.8737) rotate(0.03deg);">DEZ</span>
<span class="t" style="left:814.90px;top:396.86px;font-size:9.5px;color:#1c1c1c;transform:scaleX(0.9525) rotate(0.03deg);">JAN</span>
<span class="t" style="left:902.50px;top:396.86px;font-size:9.5px;color:#1c1c1c;transform:scaleX(0.8385) rotate(0.03deg);">FEB</span>
<span class="t" style="left:987.40px;top:396.86px;font-size:9.5px;color:#1c1c1c;transform:scaleX(0.9517) rotate(0.03deg);">MAE</span>
<svg width="1030" height="671" viewBox="0 0 1030 671"><polygon points="590.5999999999999,450.2 604.3,436.5 618.0,450.2 604.3,463.9" fill="#bfe07c"/><polygon points="624.5999999999999,450.2 638.3,436.5 652.0,450.2 638.3,463.9" fill="#bfe07c"/><polygon points="739.9,450.2 753.6,436.5 767.3000000000001,450.2 753.6,463.9" fill="#bfe07c"/><polygon points="882.3,450.2 896,436.5 909.7,450.2 896,463.9" fill="#bfe07c"/><polygon points="954.5,450.2 968.2,436.5 981.9000000000001,450.2 968.2,463.9" fill="#bfe07c"/><path d="M779.4 410 V671" stroke="#5a68a0" stroke-width="1"/><path d="M638.3 465.5 V671" stroke="#1414ee" stroke-width="1.0"/><circle cx="638.3" cy="465.5" r="2.1" fill="#0a0aee"/><path d="M753.6 465.5 V671" stroke="#5a5ae6" stroke-width="1.4"/><circle cx="753.6" cy="465.5" r="2.1" fill="#0a0aee"/><path d="M896 465.5 V671" stroke="#4a4ae8" stroke-width="1.3"/><circle cx="896" cy="465.5" r="2.1" fill="#0a0aee"/><path d="M968.2 465.5 V671" stroke="#4a4aec" stroke-width="1.15"/><circle cx="968.2" cy="465.5" r="2.1" fill="#0a0aee"/></svg>
<span class="t" style="left:748.60px;top:445.76px;font-size:9.5px;color:#2a222a;transform:scaleX(1.0000) rotate(0.03deg);">-1</span>
<svg width="1030" height="671" viewBox="0 0 1030 671"><path d="M602.4 484 H968.2 V495.4 H605.4 Q602.4 495.4 602.4 492.4 Z" fill="#f39c35"/><path d="M968.2 484 V495.4" stroke="#5a5aee" stroke-width="1.1"/><path d="M599 484.3 L606.2 484.3 L602.6 490.7 Z" fill="#2a9ad4" stroke="#2a7aa8" stroke-width="0.5"/><path d="M980.5 484.3 L987.7 484.3 L984.1 490.7 Z" fill="#2a9ad4" stroke="#2a7aa8" stroke-width="0.5"/><path d="M970.2 484.5 L973.8000000000001 486.7 L970.2 489 Z" fill="#3f9a3a"/><path d="M974 484.5 L977.6 486.7 L974 489 Z" fill="#3f9a3a"/><path d="M977.8 484.5 L981.4 486.7 L977.8 489 Z" fill="#3f9a3a"/><path d="M602.4 410 V671" stroke="#8e96b4" stroke-width="1" stroke-dasharray="1 1"/><path d="M689.4 410 V671" stroke="#8e96b4" stroke-width="1" stroke-dasharray="1 1"/><path d="M868.4 410 V671" stroke="#8e96b4" stroke-width="1" stroke-dasharray="1 1"/><path d="M952.5 410 V671" stroke="#8e96b4" stroke-width="1" stroke-dasharray="1 1"/><polygon points="648.5,450.2 660.7,437.4 672.9000000000001,450.2 660.7,463.0" fill="#fff" stroke="#4a8c62" stroke-width="1.5"/><polygon points="755.8,450.2 768,437.4 780.2,450.2 768,463.0" fill="#fff" stroke="#4a8c62" stroke-width="1.5"/><rect x="647.1999999999999" y="433.8" width="28.200000000000067" height="31.9" fill="none" stroke="#e2471d" stroke-width="1.6"/><rect x="754.4" y="434.3" width="26.59999999999993" height="31.4" fill="none" stroke="#e2471d" stroke-width="1.6"/><path d="M604.1 543 V557.4 H612.3 M614.3 557.4 V598 M620.2 598 V639 M625.9 639 H664 V671 M638.3 609.6 H640.9 V626.2 H638.3" stroke="#1212e8" stroke-width="1.1" fill="none"/><path d="M602.2 510 H614.3 V521 L611.9 515.2 H604.6 L602.2 521 Z" fill="#555"/><path d="M614.3 571.3 H640.4 V582.3 L638.0 576.5 H616.6999999999999 L614.3 582.3 Z" fill="#555"/><polygon points="597.9,537 604.1,530.8 610.3000000000001,537 604.1,543.2" fill="#72c043"/><polygon points="632.0999999999999,659.3 638.3,653.0999999999999 644.5,659.3 638.3,665.5" fill="#72c043"/><rect x="611" y="551" width="3.3" height="11.5" rx="1.5" fill="#ff8a62"/><rect x="614.3" y="592.3" width="5.8" height="11" rx="2.5" fill="#ff8a62"/><rect x="621" y="612.2" width="19" height="12" rx="3" fill="#ff8a62"/><rect x="620.6" y="632.6" width="5.3" height="11.8" rx="2.5" fill="#3a8c3a"/><circle cx="612.3" cy="557.4" r="1.9" fill="#0a0aee"/><circle cx="614.3" cy="598" r="1.9" fill="#0a0aee"/><circle cx="620.2" cy="618.3" r="1.9" fill="#0a0aee"/><circle cx="620.2" cy="639" r="1.9" fill="#0a0aee"/><circle cx="638.3" cy="653.2" r="1.9" fill="#0a0aee"/></svg>
<span class="t" style="left:599.50px;top:424.56px;font-size:9.5px;color:#111;font-weight:700;transform:scaleX(0.8700) rotate(0.03deg);">1.1</span>
<span class="t" style="left:632.80px;top:424.56px;font-size:9.5px;color:#111;font-weight:700;transform:scaleX(0.9835) rotate(0.03deg);">2.4</span>
<span class="t" style="left:748.00px;top:424.56px;font-size:9.5px;color:#111;font-weight:700;transform:scaleX(1.0213) rotate(0.03deg);">3.6</span>
<span class="t" style="left:890.30px;top:424.56px;font-size:9.5px;color:#111;font-weight:700;transform:scaleX(0.9986) rotate(0.03deg);">4.4</span>
<span class="t" style="left:962.30px;top:424.56px;font-size:9.5px;color:#111;font-weight:700;transform:scaleX(0.9835) rotate(0.03deg);">5.2</span>
<span class="t" style="left:598.13px;top:445.76px;font-size:9.5px;color:#2a222a;transform:scaleX(0.8592) rotate(0.03deg);transform-origin:50% 0;">-18</span>
<span class="t" style="left:632.33px;top:445.76px;font-size:9.5px;color:#2a222a;transform:scaleX(0.9028) rotate(0.03deg);transform-origin:50% 0;">-17</span>
<span class="t" style="left:654.33px;top:445.76px;font-size:9.5px;color:#2a222a;transform:scaleX(0.8956) rotate(0.03deg);transform-origin:50% 0;">-16</span>
<span class="t" style="left:761.43px;top:445.76px;font-size:9.5px;color:#2a222a;transform:scaleX(0.8956) rotate(0.03deg);transform-origin:50% 0;">-10</span>
<span class="t" style="left:891.77px;top:445.76px;font-size:9.5px;color:#2a222a;transform:scaleX(0.9464) rotate(0.03deg);transform-origin:50% 0;">-4</span>
<span class="t" style="left:994.80px;top:485.46px;font-size:9.5px;color:#4f9a2e;transform:scaleX(0.9271) rotate(0.03deg);">-5 T</span>
<span class="t" style="left:625.30px;top:532.53px;font-size:10px;color:#222;transform:scaleX(0.9218) rotate(0.03deg);">01.11.19</span>
<span class="t" style="left:659.70px;top:654.53px;font-size:10px;color:#222;transform:scaleX(0.9218) rotate(0.03deg);">13.11.19</span>
</body></html>
